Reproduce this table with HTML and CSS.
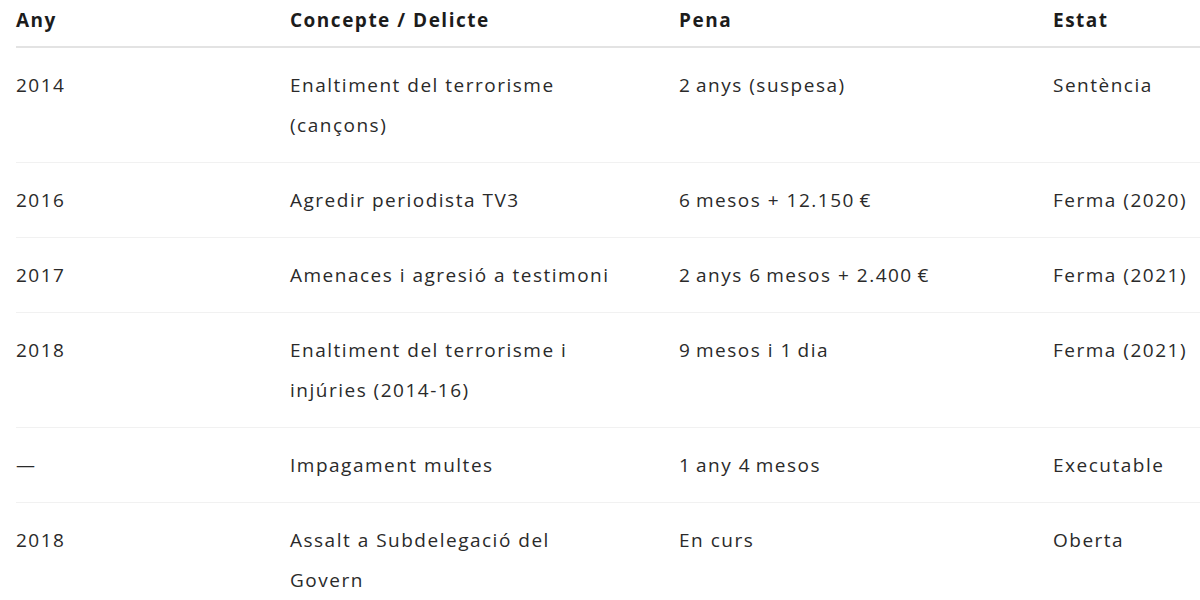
FILE: index.html
```html
<!DOCTYPE html>
<html lang="ca">
<head>
<meta charset="utf-8">
<title>Condemnes</title>
<link rel="stylesheet" href="styles.css">
</head>
<body>
<table class="sentences">
  <colgroup>
    <col class="c-any">
    <col class="c-concepte">
    <col class="c-pena">
    <col class="c-estat">
  </colgroup>
  <thead>
    <tr><th>Any</th><th>Concepte / Delicte</th><th>Pena</th><th>Estat</th></tr>
  </thead>
  <tbody>
    <tr><td>2014</td><td>Enaltiment del terrorisme<br>(cançons)</td><td>2&#8201;anys (suspesa)</td><td>Sentència</td></tr>
    <tr><td>2016</td><td>Agredir periodista TV3</td><td>6&#8201;mesos + 12.150&#8201;€</td><td>Ferma (2020)</td></tr>
    <tr><td>2017</td><td>Amenaces i agresió a testimoni</td><td>2&#8201;anys 6&#8201;mesos + 2.400&#8201;€</td><td>Ferma (2021)</td></tr>
    <tr><td>2018</td><td>Enaltiment del terrorisme i<br>injúries (2014-16)</td><td>9&#8201;mesos i 1&#8201;dia</td><td>Ferma (2021)</td></tr>
    <tr><td>—</td><td>Impagament multes</td><td>1&#8201;any 4&#8201;mesos</td><td>Executable</td></tr>
    <tr><td>2018</td><td>Assalt a Subdelegació del<br>Govern</td><td>En curs</td><td>Oberta</td></tr>
  </tbody>
</table>
</body>
</html>
```

FILE: styles.css
```css
html, body {
  margin: 0;
  padding: 0;
  background: #ffffff;
  overflow: hidden;
}
body {
  font-family: "Open Sans", "Noto Sans", sans-serif;
  font-size: 19px;
  letter-spacing: 1.5px;
  color: #2a2a2a;
  padding-left: 16px;
}
.sentences {
  border-collapse: collapse;
  table-layout: fixed;
  width: 1200px;
}
.c-any { width: 274px; }
.c-concepte { width: 389px; }
.c-pena { width: 374px; }
.c-estat { width: 163px; }
.sentences th,
.sentences td {
  text-align: left;
  vertical-align: top;
  padding: 17px 0;
  line-height: 40px;
  white-space: nowrap;
}
.sentences th {
  font-weight: 700;
  color: #1c1c1c;
  padding: 0 0 6px;
  border-bottom: 2px solid #e3e3e3;
}
.sentences td {
  border-bottom: 1px solid #f1f1f1;
  font-weight: 400;
}
```
